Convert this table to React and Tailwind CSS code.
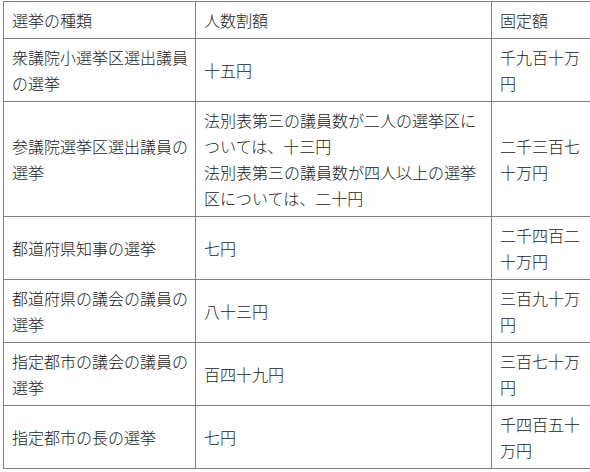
import React from 'react';

const rows = [
  { kind: '衆議院小選挙区選出議員の選挙', perHead: ['十五円'], fixed: '千九百十万円' },
  {
    kind: '参議院選挙区選出議員の選挙',
    perHead: [
      '法別表第三の議員数が二人の選挙区については、十三円',
      '法別表第三の議員数が四人以上の選挙区については、二十円',
    ],
    fixed: '二千三百七十万円',
  },
  { kind: '都道府県知事の選挙', perHead: ['七円'], fixed: '二千四百二十万円' },
  { kind: '都道府県の議会の議員の選挙', perHead: ['八十三円'], fixed: '三百九十万円' },
  { kind: '指定都市の議会の議員の選挙', perHead: ['百四十九円'], fixed: '三百七十万円' },
  { kind: '指定都市の長の選挙', perHead: ['七円'], fixed: '千四百五十万円' },
];

const cell = 'border border-[#808080] pl-2 pr-1 py-[5px] align-middle text-left font-light';

export default function App() {
  return (
    <div
      className="bg-white w-[590px] h-[472px] pl-[3px] pt-[1px] text-[16px] leading-[26px] text-[#1a1a1a]"
      style={{ fontFamily: '"Noto Sans CJK JP", "Noto Sans", sans-serif' }}
    >
      <table className="border-collapse table-fixed w-[587px]">
        <colgroup>
          <col className="w-[192px]" />
          <col className="w-[296px]" />
          <col className="w-[99px]" />
        </colgroup>
        <thead>
          <tr>
            <th className={cell}>選挙の種類</th>
            <th className={cell}>人数割額</th>
            <th className={cell}>固定額</th>
          </tr>
        </thead>
        <tbody>
          {rows.map((r) => (
            <tr key={r.kind}>
              <td className={cell}>{r.kind}</td>
              <td className={cell}>
                {r.perHead.map((p) => (
                  <div key={p}>{p}</div>
                ))}
              </td>
              <td className={cell}>{r.fixed}</td>
            </tr>
          ))}
        </tbody>
      </table>
    </div>
  );
}
